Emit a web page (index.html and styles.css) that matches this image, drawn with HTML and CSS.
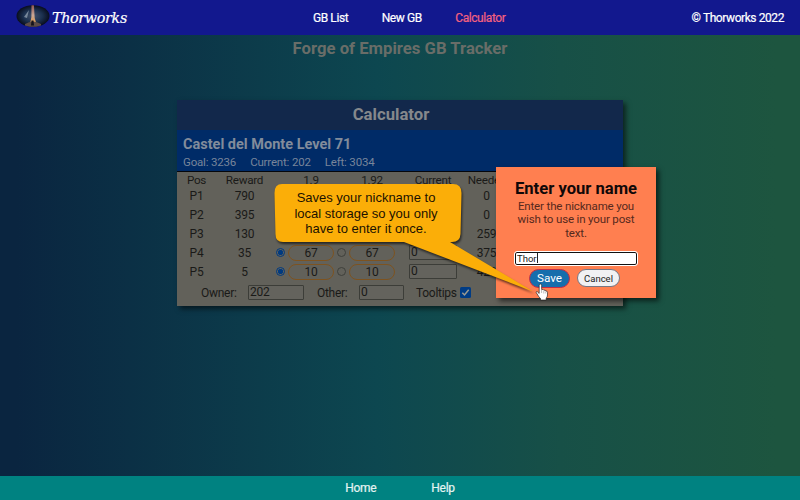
FILE: index.html
```html
<!DOCTYPE html>
<html lang="en">
<head>
<meta charset="utf-8">
<title>Forge of Empires GB Tracker</title>
<link rel="stylesheet" href="styles.css">
</head>
<body>
<header class="topbar">
  <div class="brand">
    <svg class="logo" width="34" height="22" viewBox="0 0 34 22">
      <defs>
        <radialGradient id="sky"><stop offset="0" stop-color="#45536b"/><stop offset=".55" stop-color="#1c3150"/><stop offset="1" stop-color="#070b1a"/></radialGradient>
        <linearGradient id="beam" x1="0" y1="0" x2="0" y2="1"><stop offset="0" stop-color="#8d5450"/><stop offset=".6" stop-color="#c9a797"/><stop offset="1" stop-color="#d89a58"/></linearGradient>
        <clipPath id="oval"><ellipse cx="17" cy="11" rx="16.5" ry="10.8"/></clipPath>
      </defs>
      <g clip-path="url(#oval)">
        <rect width="34" height="22" fill="url(#sky)"/>
        <path d="M8 12l5-7-2 8z" fill="#9aa9b8" opacity=".7"/>
        <path d="M15.5 0h2.400l.8 13 1.200 4h-5.500l1-5z" fill="url(#beam)"/>
        <path d="M9 19q8-5 16 0v3H9z" fill="#5c4b47"/>
        <path d="M15.500 15.500h2l.5 5h-3z" fill="#15121b"/>
      </g>
    </svg>
    <span class="brand-name">Thorworks</span>
  </div>
  <nav class="nav"><a>GB List</a><a>New GB</a><a class="active">Calculator</a></nav>
  <span class="copy">© Thorworks 2022</span>
</header>
<main class="page">
  <h1 class="title">Forge of Empires GB Tracker</h1>
  <section class="card">
    <h2 class="card-title">Calculator</h2>
    <div class="building">
      <h3 class="building-name">Castel del Monte Level 71</h3>
      <div class="stats"><span>Goal: 3236</span><span>Current: 202</span><span>Left: 3034</span></div>
    </div>
    <div class="table">
      <div class="row head"><span>Pos</span><span>Reward</span><span></span><span>1.9</span><span></span><span>1.92</span><span></span><span>Current</span><span>Needed</span></div>
      <div class="row"><span>P1</span><span>790</span><span></span><span></span><span></span><span></span><span></span><span></span><span class="need">0</span></div>
      <div class="row"><span>P2</span><span>395</span><span></span><span></span><span></span><span></span><span></span><span></span><span class="need">0</span></div>
      <div class="row"><span>P3</span><span>130</span><span></span><span></span><span></span><span></span><span></span><span></span><span class="need">259</span></div>
      <div class="row"><span>P4</span><span>35</span><i class="radio on"></i><b class="pill">67</b><i class="radio"></i><b class="pill">67</b><span></span><b class="field cur">0</b><span class="need">375</span></div>
      <div class="row"><span>P5</span><span>5</span><i class="radio on"></i><b class="pill">10</b><i class="radio"></i><b class="pill">10</b><span></span><b class="field cur">0</b><span class="need">423</span></div>
    </div>
    <div class="options">
      <span class="owner-label">Owner:</span><b class="field owner">202</b>
      <span class="other-label">Other:</span><b class="field other">0</b>
      <span class="tips-label">Tooltips</span>
      <svg class="check" width="11" height="11" viewBox="0 0 11 11"><rect width="11" height="11" rx="1.5" fill="#003c85"/><path d="M2.3 5.8l2.2 2.2 4.2-5.2" fill="none" stroke="#9a9a92" stroke-width="1.5"/></svg>
    </div>
  </section>
</main>
<footer class="footer"><a>Home</a><a>Help</a></footer>

<div class="dialog">
  <h2 class="dialog-title">Enter your name</h2>
  <p class="dialog-text">Enter the nickname you wish to use in your post text.</p>
  <div class="name-input"><span>Thor</span><i class="caret"></i></div>
  <div class="buttons"><button class="save">Save</button><button class="cancel">Cancel</button></div>
</div>

<svg class="callout-shape" width="290" height="130" viewBox="0 0 290 130">
  <path d="M12 5H183Q191.500 5 191.500 14L190.500 55Q190 63 182 63L180 63L263 112.500L134 63L13 63Q5.500 63 5.500 55L4.500 14Q4.500 5 12 5Z" fill="#fbae08"/>
</svg>
<p class="callout-text">Saves your nickname to<br>local storage so you only<br>have to enter it once.</p>
<svg class="cursor" width="14" height="18" viewBox="0 0 14 18"><path d="M4.2 10.500V2.300Q4.200 1 5.400 1T6.600 2.300V6.500Q8.500 5.900 8.800 7.200Q10.500 6.700 10.800 8Q12.400 7.800 12.500 9.300V12Q12.400 14 11.200 15.200V17H5.500V15.500Q3.800 14 2.800 12L1.200 9.600Q1 8.300 2.200 8.600Z" fill="#fff" stroke="#111" stroke-width=".6"/><path d="M6.600 7v3M8.800 8v2.500M10.800 8.500v2" stroke="#555" stroke-width=".4"/></svg>
</body>
</html>
```
FILE: styles.css
```css
* { box-sizing: border-box; }
body {
  margin: 0;
  width: 800px;
  height: 500px;
  display: flex;
  flex-direction: column;
  overflow: hidden;
  font: 12px/14px Roboto, sans-serif;
  letter-spacing: -.28px;
  color: #1a1a18;
  background: linear-gradient(90deg, #0a2540 2%, #0d4750 47%, #175047 70%, #1d553f 97%);
}
h1, h2, h3, p { margin: 0; }
i, b { font-style: normal; font-weight: 400; }

.topbar {
  height: 35px;
  flex: none;
  display: grid;
  grid-template-columns: 313px 1fr auto;
  align-items: center;
  padding-right: 16px;
  background: #12188e;
  color: #fff;
  letter-spacing: -.42px;
  -webkit-text-stroke: .2px;
}
.brand { display: flex; align-items: center; padding-left: 16px; margin-top: -3px; }
.brand-name {
  margin: 3px 0 0 2px;
  font: italic 400 14.300px/18px "DejaVu Serif", serif;
  letter-spacing: -.33px;
}
.nav { display: flex; gap: 33.500px; }
.nav .active { color: #f5627f; }

.page { flex: 1; display: flex; flex-direction: column; align-items: center; letter-spacing: -.28px; }
.title { margin-top: 3px; font-size: 16.700px; line-height: 21px; font-weight: 700; letter-spacing: 0; color: #696d68; }

.card {
  width: 446px;
  height: 206px;
  margin-top: 41px;
  background: #62615a;
  box-shadow: 3px 3px 5px rgba(0, 0, 0, .55);
}
.card-title {
  height: 30px;
  padding-right: 18px;
  line-height: 29px;
  font-size: 16.700px;
  letter-spacing: 0;
  text-align: center;
  color: #85888c;
  background: #12284b;
}
.building { height: 42px; padding: 6px 6px 0; background: #002b67; border-bottom: 1px solid #05070c; color: #78859a; }
.building-name { font-size: 14.500px; line-height: 17px; letter-spacing: 0; color: #828c9b; }
.stats { display: flex; gap: 14px; margin-top: 2px; font-size: 11.500px; letter-spacing: -.18px; }

.row {
  display: grid;
  grid-template-columns: 39px 57px 15px 46px 15px 46px 6px 64px 44px;
  height: 19px;
  align-items: center;
  justify-items: center;
}
.row.head { height: 14px; padding-top: 1px; font-size: 11.700px; }
.need { margin-right: 1px; }
.radio { width: 9px; height: 9px; border: 1px solid #3f403b; border-radius: 50%; }
.radio.on { border-color: #003a80; background: radial-gradient(circle, #003a80 2.200px, #62615a 3px); }
.pill { width: 46px; height: 16px; border: 1px solid #7d5320; border-radius: 8px; text-align: center; }
.field { height: 15px; padding-left: 1px; line-height: 13px; border: 1px solid #3c3d38; border-radius: 1px; background: #64635d; }
.cur { width: 48px; }

.options { display: flex; align-items: center; height: 23px; padding-left: 24px; }
.owner-label { width: 47px; }
.owner { width: 56px; }
.other-label { width: 55px; padding-left: 13px; }
.other { width: 45px; }
.tips-label { width: 56px; padding-left: 12px; }

.footer {
  height: 24px;
  flex: none;
  display: flex;
  justify-content: center;
  align-items: center;
  gap: 55px;
  background: #008281;
  color: #e4f4f2;
  -webkit-text-stroke: .2px;
}

.dialog {
  position: absolute;
  left: 496px;
  top: 167px;
  width: 160px;
  height: 131px;
  padding: 12px 17px 0;
  background: #ff7f50;
  box-shadow: 3px 3px 5px rgba(0, 0, 0, .6);
  text-align: center;
}
.dialog-title { font-size: 16.600px; line-height: 20px; letter-spacing: 0; white-space: nowrap; color: #100808; }
.dialog-text { margin-top: 1px; font-size: 11.500px; line-height: 13.300px; letter-spacing: -.15px; color: #56291d; }
.name-input {
  display: flex;
  align-items: center;
  width: 122px;
  height: 13px;
  margin: 12px 0 0 2px;
  padding-left: 1px;
  border: 1.500px solid #111;
  border-radius: 2px;
  outline: 1px solid #fff;
  background: #fff;
  font-size: 9.500px;
  line-height: 10px;
  letter-spacing: 0;
}
.name-input span { padding-top: 1px; }
.caret { width: 1px; height: 10px; background: #222; }
.buttons { display: flex; align-items: center; gap: 7px; margin: 4px 0 0 16px; }
.buttons button { padding: 0; font-family: Roboto, sans-serif; }
.save { width: 41px; height: 19px; border: 1.500px solid #c52c44; border-radius: 10px; background: #166eac; color: #fff; font-size: 11.700px; }
.cancel { width: 43px; height: 18px; border: 1px solid #767784; border-radius: 9px; background: #f1f1f3; color: #222; font-size: 9.500px; }

.callout-shape { position: absolute; left: 270px; top: 179px; filter: drop-shadow(1px 2px 1px rgba(0, 0, 0, .6)); }
.callout-text {
  position: absolute;
  left: 273px;
  top: 190px;
  width: 186px;
  text-align: center;
  font: 13px/15.500px "Liberation Sans", sans-serif;
  letter-spacing: 0;
  color: #1b1200;
}
.cursor { position: absolute; left: 535px; top: 283px; }
```
